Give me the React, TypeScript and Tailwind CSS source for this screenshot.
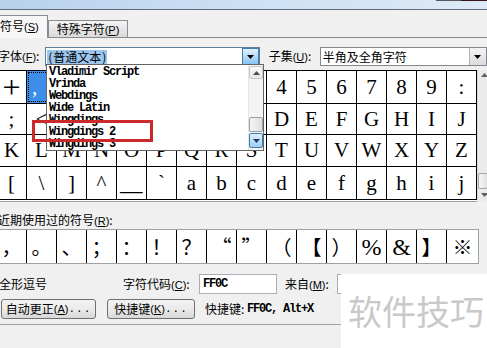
import React from "react";

const K = ({ c }: { c: string }) => (
  <span className="font-['Liberation_Sans',sans-serif] text-[11px]">
    (<span className="underline underline-offset-1">{c}</span>)
  </span>
);

const TriDown = ({ color = "#000" }: { color?: string }) => (
  <svg width="7" height="4" viewBox="0 0 7 4">
    <path d="M0 0H7L3.5 4Z" fill={color} />
  </svg>
);
const TriUp = ({ color = "#000" }: { color?: string }) => (
  <svg width="7" height="4" viewBox="0 0 7 4">
    <path d="M0 4H7L3.5 0Z" fill={color} />
  </svg>
);

const rows: string[][] = [
  ["+", ",", "-", ".", "/", "0", "1", "2", "3", "4", "5", "6", "7", "8", "9", ":"],
  [";", "<", "=", ">", "?", "@", "A", "B", "C", "D", "E", "F", "G", "H", "I", "J"],
  ["K", "L", "M", "N", "O", "P", "Q", "R", "S", "T", "U", "V", "W", "X", "Y", "Z"],
  ["[", "\\", "]", "^", "_", "`", "a", "b", "c", "d", "e", "f", "g", "h", "i", "j"],
];
const rowH = ["h-[33px]", "h-[31px]", "h-[32px]", "h-[33px]"];

const recent = ["，", "。", "、", "；", "：", "！", "？", "“", "”", "（", "【", "）", "%", "&", "】", "※"];

const fonts = ["Vladimir Script", "Vrinda", "Webdings", "Wide Latin", "Wingdings", "Wingdings 2", "Wingdings 3"];

function GridCell({ ch, selected }: { ch: string; selected?: boolean }) {
  let inner: React.ReactNode = ch;
  if (ch === "+") inner = <span className="text-[32px] leading-none">+</span>;
  if (ch === "_") inner = <span className="inline-block scale-x-[2.1]">_</span>;
  return (
    <div
      className={
        selected
          ? "w-[30px] h-full border-r border-black flex items-center justify-start pl-[5px] bg-[#3d8ee8] text-white outline-1 outline-dotted outline-black -outline-offset-2"
          : "w-[30px] h-full border-r border-black flex items-center justify-center"
      }
    >
      {inner}
    </div>
  );
}

export default function App() {
  return (
    <div className="relative w-[487px] h-[348px] overflow-hidden bg-[#f0f0f0] text-black text-[12px] leading-[12px] font-['Noto_Sans_CJK_SC',sans-serif]">
      {/* title strip */}
      <div className="h-[10px] border-b border-[#5d6b7c] bg-gradient-to-r from-[#b7d1ec] via-[#cde0f4] to-[#dde9f6] flex justify-end items-start">
        <div className="w-[25px] h-[1px] bg-[#55595f]" />
        <div className="w-[26px] h-[1px] bg-[#3b1414]" />
      </div>

      {/* tabs */}
      <div className="flex items-end h-[28px]">
        <div className="h-[23px] w-[48px] border-t border-r border-[#898c95] bg-[#f7f7f7] flex items-center pb-[1px]">
          <span>
            符号<K c="S" />
          </span>
        </div>
        <div className="h-[18px] w-[80px] border border-[#898c95] bg-gradient-to-b from-[#f4f4f4] to-[#d9d9d9] flex items-center justify-center">
          <span>
            特殊字符<K c="P" />
          </span>
        </div>
        <div className="flex-1 h-[1px] bg-[#898c95]" />
      </div>

      {/* font row */}
      <div className="flex items-center mt-[9px] h-[19px]">
        <div className="-ml-[2px] w-[48px] whitespace-nowrap">
          字体<K c="F" />:
        </div>
        <div className="w-[218px] h-[19px] border border-[#5f7d9c] bg-white flex items-center">
          <div className="ml-[1px] w-[60px] h-[14px] bg-[#9cc6ee] flex items-center whitespace-nowrap">
            <span className="inline-block w-[6px] text-center">(</span>普通文本<span className="inline-block w-[6px] text-center">)</span>
          </div>
          <div className="flex-1" />
          <div className="w-[17px] h-[17px] border border-[#3c7fb1] bg-gradient-to-b from-[#e3f1fc] to-[#86c4f0] flex items-center justify-center">
            <TriDown />
          </div>
        </div>
        <div className="ml-[9px] w-[52px] whitespace-nowrap">
          子集<K c="U" />:
        </div>
        <div className="w-[170px] h-[19px] border border-[#828790] bg-white flex items-center">
          <span className="pl-[2px] whitespace-nowrap">半角及全角字符</span>
          <div className="flex-1" />
          <div className="w-[17px] h-[17px] border-l border-[#b5b5b5] bg-gradient-to-b from-[#f4f4f4] to-[#dcdcdc] flex items-center justify-start pl-[4px]">
            <TriDown />
          </div>
        </div>
      </div>

      {/* character grid */}
      <div className="mt-[4px] -ml-[3px] flex">
        <div className="w-[480px]">
          <div className="border-t border-black bg-white font-['Liberation_Serif',serif] text-[21px] leading-none">
            {rows.map((r, ri) => (
              <div key={ri} className={`flex border-b border-black ${rowH[ri]}`}>
                {r.map((ch, ci) => (
                  <GridCell key={ci} ch={ch} selected={ri === 0 && ci === 1} />
                ))}
              </div>
            ))}
          </div>
          <div className="h-[1px] bg-white" />
          <div className="h-[1px] bg-[#a0a0a0]" />
        </div>
        <div className="w-[10px] h-[131px] bg-[#ebebeb] border-l border-[#dcdcdc] flex flex-col items-center">
          <div className="mt-[3px] pl-[4px]">
            <TriUp color="#606060" />
          </div>
          <div className="flex-1" />
          <div className="w-[10px] h-[16px] border border-[#a8a8a8] rounded-[2px] bg-gradient-to-r from-[#f6f6f6] to-[#e2e2e2]" />
          <div className="h-[12px] flex items-center pl-[4px]">
            <TriDown color="#606060" />
          </div>
        </div>
      </div>

      {/* recent label */}
      <div className="mt-[12px] -ml-[2px] whitespace-nowrap">
        近期使用过的符号<K c="R" />:
      </div>

      {/* recent row */}
      <div className="mt-[2px] -ml-[3px] w-[482px] h-[35px] border-t border-b border-r border-[#a0a0a0] bg-white flex text-[20px] leading-none">
        {recent.map((ch, i) => (
          <div
            key={i}
            className={
              (i === 15 ? "w-[31px]" : "w-[30px] border-r border-black") +
              " h-full flex items-center justify-center" +
              (ch === "%" || ch === "&" ? " font-['Liberation_Serif',serif] text-[24px]" : "")
            }
          >
            {ch}
          </div>
        ))}
      </div>

      {/* code row */}
      <div className="mt-[10px] h-[20px] flex items-center whitespace-nowrap">
        <div className="-ml-[1px] w-[124px]">全形逗号</div>
        <div className="w-[76px]">
          字符代码<K c="C" />:
        </div>
        <div className="w-[78px] h-[20px] border border-[#abadb3] bg-white flex items-center pl-[3px] font-['Liberation_Mono',monospace] text-[12px] font-bold tracking-[-1.2px]">
          FF0C
        </div>
        <div className="ml-[8px] w-[52px]">
          来自<K c="M" />:
        </div>
        <div className="flex-1 h-[20px] border border-[#abadb3] bg-white" />
      </div>

      {/* buttons row */}
      <div className="mt-[5px] h-[20px] flex items-center whitespace-nowrap">
        <div className="ml-[1px] w-[95px] h-[20px] border border-[#707070] rounded-[3px] bg-gradient-to-b from-[#f2f2f2] via-[#ebebeb] to-[#d8d8d8] flex items-center justify-center">
          自动更正<K c="A" />
          <span className="font-['Liberation_Mono',monospace] text-[11px] tracking-[1px]">...</span>
        </div>
        <div className="ml-[11px] w-[88px] h-[20px] border border-[#707070] rounded-[3px] bg-gradient-to-b from-[#f2f2f2] via-[#ebebeb] to-[#d8d8d8] flex items-center justify-center">
          快捷键<K c="K" />
          <span className="font-['Liberation_Mono',monospace] text-[11px] tracking-[1px]">...</span>
        </div>
        <div className="ml-[10px] flex items-center">
          <span>快捷键</span>
          <span className="inline-block w-[6px]">:</span>
          <span className="font-['Liberation_Mono',monospace] text-[12px] font-bold tracking-[-1.2px]">FF0C, Alt+X</span>
        </div>
      </div>

      {/* bottom separator */}
      <div className="mt-[5px] h-[1px] bg-[#a0a0a0]" />

      {/* dropdown list overlay */}
      <div className="absolute left-[46px] top-[64px] w-[218px] h-[87px] border border-[#646464] bg-white flex font-['Liberation_Mono',monospace] text-[12px] font-bold tracking-[-1.2px]">
        <div className="flex-1 pt-[1px] pl-[2px] overflow-hidden">
          {fonts.map((f) => (
            <div key={f} className="h-[12px] leading-[12px] whitespace-nowrap">
              {f}
            </div>
          ))}
        </div>
        <div className="w-[15px] h-full bg-[#f4f4f4] border-l border-[#e6e6e6] flex flex-col items-center">
          <div className="mt-[1px] w-[14px] h-[13px] border border-[#c8c8c8] rounded-[2px] bg-gradient-to-b from-[#fbfbfb] to-[#e8e8e8] flex items-center justify-center">
            <TriUp color="#4d4d4d" />
          </div>
          <div className="h-[38px]" />
          <div className="w-[14px] h-[15px] border border-[#9d9d9d] rounded-[2px] bg-gradient-to-r from-[#f6f6f6] to-[#dedede]" />
          <div className="mt-[1px] w-[14px] h-[15px] border border-[#3c7fb1] rounded-[2px] bg-gradient-to-b from-[#e0effc] to-[#9fcdf2] flex items-center justify-center">
            <TriDown color="#1d3e66" />
          </div>
        </div>
      </div>

      {/* red highlight box */}
      <div className="absolute left-[32px] top-[120px] w-[121px] h-[22px] border-[3px] border-[#cc2a2a]" />

      {/* watermark */}
      <div className="absolute left-[341px] top-[274px] right-0 bottom-0 bg-white">
        <div className="pl-[7px] pt-[20px] text-[34px] leading-[34px] text-[#c9c9c9] whitespace-nowrap">软件技巧</div>
      </div>
    </div>
  );
}
